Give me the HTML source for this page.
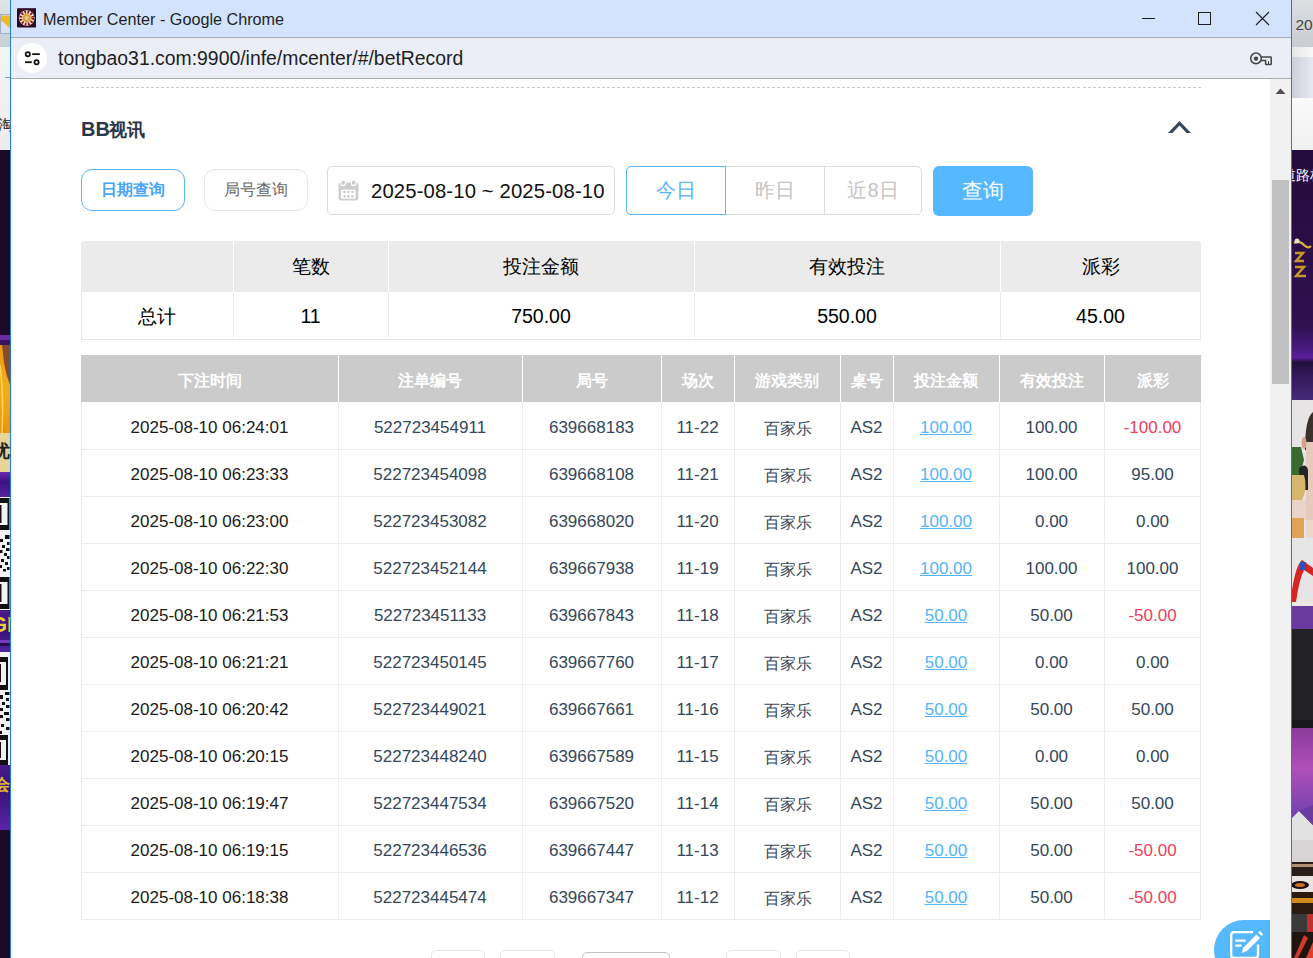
<!DOCTYPE html>
<html><head><meta charset="utf-8">
<style>
*{box-sizing:border-box;margin:0;padding:0}
html,body{width:1313px;height:958px;overflow:hidden;background:#fff;font-family:"Liberation Sans",sans-serif}
.a{position:absolute}
.c{position:absolute;text-align:center;white-space:nowrap;overflow:hidden}
.dh{color:#fff;font-size:16px;font-weight:bold;padding-top:2px}
.dd{color:#34475a;font-size:17px;padding-top:2px}
.dd.k{color:#1a1a1a}
.lnk{color:#55b4fd}
.lnk u{text-decoration:underline;text-underline-offset:1px}
.neg{color:#f0405c}
.sh{color:#000;font-size:19px;padding-top:0}
.sv{color:#000;font-size:19.5px;padding-top:1px}
#titlebar{left:11px;top:0;width:1280px;height:37px;background:#d3e3fd}
#tline{left:11px;top:37px;width:1280px;height:1px;background:#a7abb2}
#addr{left:11px;top:38px;width:1280px;height:40px;background:#ebeef6}
#aline{left:11px;top:78px;width:1280px;height:1px;background:#a9abaf}
#sb{left:1270px;top:79px;width:21px;height:879px;background:#f1f1f1}
#lborder{left:10px;top:0;width:1px;height:958px;background:#1a7fd6}
#rborder{left:1291px;top:0;width:1px;height:958px;background:#1a7fd6}
.title{left:43px;top:9.6px;font-size:16.2px;color:#1f1f1f;white-space:nowrap;line-height:18px}
.url{left:58px;top:47.3px;font-size:19.4px;color:#1f1f1f;white-space:nowrap;line-height:22px}
.btn{position:absolute;text-align:center;white-space:nowrap}
</style></head>
<body>
<!-- desktop strips -->
<div class="a" style="left:0;top:0;width:10px;height:958px;background:#1c0a28;overflow:hidden">
  <div class="a" style="left:0;top:0;width:10px;height:47px;background:linear-gradient(#e2e4e8,#c9ced6)"></div>
  <svg class="a" style="left:0;top:14px" width="10" height="20" viewBox="0 0 10 20"><rect x="0.5" y="0.5" width="11" height="19" fill="#dde2ea" stroke="#9fb0c8" stroke-width="1"/><path d="M1 1.5 H10 V14 Q7 12 5 9.5 Q3 7.5 1 7 Z" fill="#f2b820"/></svg>
  
  <div class="a" style="left:0;top:47px;width:10px;height:103px;background:linear-gradient(#f4f4f4,#ececec)"></div>
  <div class="a" style="left:5px;top:77px;width:5px;height:1px;background:#999"></div>
  <div class="a" style="left:-2px;top:115px;font-size:15px;color:#222;line-height:20px;white-space:nowrap">淘</div>
  <div class="a" style="left:0;top:335px;width:10px;height:5px;background:#6a2aa0"></div>
  <div class="a" style="left:0;top:340px;width:10px;height:5px;background:#3a1260"></div>
  
  <div class="a" style="left:0;top:433px;width:10px;height:39px;background:#e6d49a"></div>
  <div class="a" style="left:-8px;top:440px;font-size:18px;font-weight:bold;color:#222;line-height:22px">优</div>
  <div class="a" style="left:0;top:472px;width:10px;height:25px;background:linear-gradient(#6a2ab0,#3a1280 40%,#5a22a0)"></div>
  <svg class="a" style="left:0;top:345px" width="10" height="88" viewBox="0 0 10 88">
    <defs><linearGradient id="og" x1="0" y1="0" x2="0" y2="1"><stop offset="0" stop-color="#e89a18"/><stop offset="0.5" stop-color="#f4ae1a"/><stop offset="1" stop-color="#e8940e"/></linearGradient></defs>
    <rect width="10" height="88" fill="url(#og)"/>
    <path d="M2 0 H10 V40 Q6 30 4 18 Q3 8 2 0 Z" fill="#8a4a2a"/>
    <path d="M0 20 Q4 50 2 88" stroke="#ffe070" stroke-width="1.5" fill="none" opacity="0.8"/>
  </svg>
  <div class="a" style="left:0;top:497px;width:10px;height:113px;background:#f4f4f4"></div>
  <svg class="a" style="left:0;top:497px" width="10" height="113" viewBox="0 0 10 113">
    <path d="M0 1 H9.5 V33 H0 V28 H7.5 V6 H0 Z" fill="#111"/>
    <rect x="0" y="8" width="1.5" height="18" fill="#111"/>
    <g fill="#111"><rect x="5" y="38" width="4.5" height="4"/><rect x="0" y="42" width="3" height="3"/><rect x="7" y="45" width="2.5" height="3"/><rect x="2" y="48" width="3" height="3"/><rect x="6" y="51" width="3.5" height="3"/><rect x="0" y="53" width="2.5" height="3"/><rect x="4" y="56" width="3" height="3"/><rect x="7" y="59" width="2.5" height="3"/><rect x="1" y="62" width="3" height="3"/><rect x="5" y="65" width="3" height="3"/><rect x="0" y="68" width="2" height="3"/><rect x="7" y="70" width="2.5" height="3"/><rect x="3" y="72" width="3" height="2.5"/></g>
    <path d="M0 80 H9.5 V112 H0 V107 H7.5 V85 H0 Z" fill="#111"/>
    <rect x="0" y="87" width="1.5" height="18" fill="#111"/>
  </svg>
  <div class="a" style="left:0;top:610px;width:10px;height:42px;background:linear-gradient(#4a1a8a,#3a1278 50%,#5222a0)"></div>
  <div class="a" style="left:-10px;top:613px;font-size:22px;font-weight:bold;color:#f0c838;line-height:24px">GR</div><div class="a" style="left:0;top:640px;width:10px;height:3px;background:#7a3ac0"></div><div class="a" style="left:0;top:643px;width:10px;height:3px;background:#2a0a50"></div>
  <div class="a" style="left:0;top:652px;width:10px;height:113px;background:#f2f2f2"></div>
  <svg class="a" style="left:0;top:652px" width="10" height="113" viewBox="0 0 10 113">
    <path d="M0 5 H8 V38 H0 V33 H6 V10 H0 Z" fill="#111"/>
    <rect x="0" y="12" width="1" height="18" fill="#111"/>
    <g fill="#111"><rect x="5" y="40" width="4.5" height="3"/><rect x="0" y="43" width="3" height="4"/><rect x="6" y="46" width="3" height="3"/><rect x="2" y="50" width="3" height="3"/><rect x="6" y="53" width="3.5" height="3"/><rect x="0" y="56" width="3" height="3"/><rect x="4" y="60" width="5" height="3"/><rect x="0" y="63" width="3" height="3"/><rect x="6" y="66" width="3.5" height="3"/><rect x="1" y="72" width="3" height="3"/><rect x="6" y="75" width="3.5" height="3"/><rect x="0" y="79" width="2" height="3"/></g>
    <path d="M0 83 H8 V113 H0 V108 H6 V88 H0 Z" fill="#111"/>
    <rect x="0" y="90" width="1" height="16" fill="#111"/>
  </svg>
  <div class="a" style="left:0;top:765px;width:10px;height:65px;background:linear-gradient(#4a1a8a,#3a1278 40%,#5a24a8)"></div>
  <div class="a" style="left:-6px;top:775px;font-size:16px;font-weight:bold;color:#e8b830;line-height:20px">会</div>
</div>
<div class="a" style="left:1292px;top:0;width:21px;height:958px;background:#2a0f45;overflow:hidden">
  <div class="a" style="left:0;top:0;width:21px;height:47px;background:linear-gradient(#dcdee2,#c8ccd3)"></div>
  <div class="a" style="left:3.5px;top:15px;font-size:15.5px;color:#444;line-height:20px;white-space:nowrap">20</div>
  <div class="a" style="left:0;top:47px;width:21px;height:10px;background:linear-gradient(to right,#e6e6e6,#f8f8f8)"></div>
  <div class="a" style="left:0;top:57px;width:21px;height:41px;background:linear-gradient(to right,#ccd0da,#e6e9f2)"></div>
  <div class="a" style="left:0;top:98px;width:21px;height:52px;background:linear-gradient(#fafafa,#f0f0f0)"></div>
  <svg class="a" style="left:0;top:150px" width="21" height="808" viewBox="0 0 21 808">
    <defs>
      <linearGradient id="g1" x1="0" y1="0" x2="0" y2="1">
        <stop offset="0" stop-color="#240b3c"/><stop offset="0.7" stop-color="#30104f"/>
        <stop offset="0.8" stop-color="#4a1a82"/><stop offset="0.83" stop-color="#5a1e9c"/>
        <stop offset="0.85" stop-color="#22103a"/><stop offset="0.9" stop-color="#33185a"/>
        <stop offset="1" stop-color="#452a78"/>
      </linearGradient>
      <linearGradient id="g2" x1="0" y1="0" x2="0" y2="1">
        <stop offset="0" stop-color="#8a3a9a"/><stop offset="0.45" stop-color="#b050b8"/><stop offset="1" stop-color="#7040b0"/>
      </linearGradient>
    </defs>
    <rect x="0" y="0" width="21" height="250" fill="url(#g1)"/>
    <text x="-10" y="29.5" font-size="13.5" fill="#fff" font-family="Liberation Sans">道路桥</text>
    <path d="M2 93 Q8 90 12 95 Q16 99 19 96" stroke="#d8b040" stroke-width="2.2" fill="none"/>
    <circle cx="5" cy="91" r="2.5" fill="#e8e0c0"/>
    <path d="M3 103 H11 L4 111 H12 M3 117 H12 L4 126 H14" stroke="#c8982a" stroke-width="2.4" fill="none"/>
    <!-- photo 399..606 -->
    <rect x="0" y="250" width="21" height="206" fill="#e6e4e4"/>
    <path d="M13 300 Q13 268 21 262 V300 Z" fill="#3a302c"/>
    <rect x="14" y="292" width="7" height="100" fill="#e6cabc"/>
    <ellipse cx="12" cy="293" rx="2.5" ry="6" fill="#d8a090"/>
    <path d="M0 297 H9 L12 310 L8 325 H0 Z" fill="#3a6a30"/>
    <path d="M7 318 Q14 312 16 320 V340 H8 Z" fill="#242424"/>
    <path d="M0 325 H12 Q16 338 10 350 H0 Z" fill="#d6b66c"/>
    <rect x="0" y="350" width="14" height="20" fill="#e8d4c8"/>
    <rect x="0" y="368" width="12" height="20" fill="#e0a458"/><rect x="14" y="370" width="7" height="20" fill="#ecd8cc"/>
    <rect x="0" y="388" width="21" height="28" fill="#e6e6e6"/>
    <path d="M0 440 Q4 415 10 410 L21 418 V426 L12 420 Q7 430 4 452 H0 Z" fill="#d82424"/>
    <rect x="8" y="412" width="6" height="8" fill="#3050c0"/>
    <rect x="0" y="452" width="21" height="4" fill="#efe8e2"/>
    <rect x="0" y="456" width="21" height="23" fill="#6a3aa0"/>
    <rect x="0" y="479" width="21" height="91" fill="#232327"/>
    <rect x="0" y="570" width="21" height="8" fill="#18181c"/>
    <rect x="0" y="578" width="21" height="90" fill="url(#g2)"/>
    <path d="M0 668 L7 661 L21 675 V690 H0 Z" fill="#e2e2e2"/>
    <path d="M7 661 L21 655 V675 Z" fill="#6a3aa0"/>
    <rect x="0" y="690" width="21" height="22" fill="#d8d4d6"/>
    <rect x="0" y="712" width="21" height="14" fill="#2a1c18"/>
    <rect x="0" y="714" width="21" height="3" fill="#b09070"/>
    <rect x="0" y="726" width="21" height="16" fill="#e8e4e2"/>
    <ellipse cx="8" cy="735" rx="9" ry="4" fill="#1a1010"/>
    <ellipse cx="8" cy="735" rx="5" ry="2" fill="#c87020"/>
    <rect x="0" y="742" width="21" height="22" fill="#2a1a10"/>
    <rect x="0" y="748" width="21" height="5" fill="#d08a20"/>
    <rect x="0" y="764" width="21" height="18" fill="#3a3a3a"/>
    <rect x="15" y="764" width="6" height="18" fill="#c03030"/>
    <rect x="0" y="782" width="21" height="26" fill="#201410"/>
    <path d="M2 808 L12 785 L16 788 L6 808 Z" fill="#d03a2a"/>
    <path d="M14 808 L21 792 V808 Z" fill="#e04030"/>
  </svg>
</div>

<div class="a" id="titlebar"></div>
<div class="a" id="tline"></div>
<div class="a" id="addr"></div>
<div class="a" id="aline"></div>
<div class="a" id="sb"></div>
<div class="a" id="lborder"></div>
<div class="a" id="rborder"></div>

<div class="a title">Member Center - Google Chrome</div>
<div class="a url">tongbao31.com:9900/infe/mcenter/#/betRecord</div>

<!-- window controls -->
<svg class="a" style="left:1130px;top:0" width="160" height="37" viewBox="0 0 160 37">
  <rect x="12" y="18" width="13" height="1" fill="#1f1f1f"/>
  <rect x="68.5" y="12.5" width="12" height="12" fill="none" stroke="#1f1f1f" stroke-width="1"/>
  <path d="M126 12 L139 25 M139 12 L126 25" stroke="#1f1f1f" stroke-width="1.1" fill="none"/>
</svg>
<!-- favicon -->
<svg class="a" style="left:16.5px;top:8px" width="19.5" height="19.7" viewBox="0 0 20 20">
  <rect x="0" y="0" width="20" height="20" rx="1.5" fill="#2c0a24"/>
  <rect x="1" y="0" width="18" height="1" fill="#5a2a50"/>
  <circle cx="10" cy="10.2" r="8" fill="#f4ece6"/>
  <circle cx="10" cy="10.2" r="6.2" fill="none" stroke="#8e1a1a" stroke-width="3" stroke-dasharray="1.8 1.45"/>
  <circle cx="10" cy="10.2" r="4.2" fill="#d8a030"/>
  <circle cx="10" cy="10.2" r="2" fill="#d8c8a8"/>
</svg>
<!-- site info icon -->
<svg class="a" style="left:17px;top:43px" width="30" height="30" viewBox="0 0 30 30">
  <circle cx="15" cy="15" r="15" fill="#fff"/>
  <circle cx="10.8" cy="11.15" r="2.1" fill="none" stroke="#111" stroke-width="1.8"/>
  <rect x="15.2" y="10.25" width="7.6" height="1.8" fill="#111"/>
  <rect x="8" y="18.3" width="6.8" height="1.8" fill="#111"/>
  <circle cx="19.55" cy="19.2" r="2.1" fill="none" stroke="#111" stroke-width="1.8"/>
</svg>
<!-- key icon -->
<svg class="a" style="left:1240px;top:45px" width="40" height="27" viewBox="0 0 40 27">
  <circle cx="16" cy="13.4" r="5.3" fill="none" stroke="#444" stroke-width="1.5"/>
  <circle cx="16" cy="13.6" r="2.2" fill="#444"/>
  <path d="M20.8 12.1 H30.6 Q31.2 12.1 31.2 12.7 V18.9 Q31.2 19.5 30.6 19.5 H26.2 Q25.6 19.5 25.6 18.9 V15.5 H20.8" fill="none" stroke="#444" stroke-width="1.5"/>
  <path d="M28.5 16.2 V19" stroke="#444" stroke-width="1"/>
</svg>

<!-- scrollbar -->
<svg class="a" style="left:1270px;top:79px" width="21" height="20"><path d="M5.5 15 L10.5 9.5 L15.5 15 Z" fill="#505050"/></svg>
<div class="a" style="left:1272px;top:180px;width:17px;height:204px;background:#c1c1c1"></div>

<!-- dashed line -->
<div class="a" style="left:81px;top:87px;width:445px;height:1px;background-image:linear-gradient(to right,#c8c8c8 0,#c8c8c8 3px,transparent 3px);background-size:5px 1px"></div><div class="a" style="left:527px;top:87px;width:555px;height:1px;background-image:linear-gradient(to right,#c8c8c8 0,#c8c8c8 3px,transparent 3px);background-size:5px 1px"></div><div class="a" style="left:1083px;top:87px;width:118px;height:1px;background-image:linear-gradient(to right,#c8c8c8 0,#c8c8c8 3px,transparent 3px);background-size:5px 1px"></div>

<!-- heading -->
<div class="a" style="left:81px;top:116.6px;font-weight:bold;color:#2b3649;line-height:24px;white-space:nowrap"><span style="font-size:20px">BB</span><span style="font-size:18px;margin-left:-0.5px">视讯</span></div>
<svg class="a" style="left:1166px;top:119px" width="27" height="16" viewBox="0 0 27 16">
  <path d="M2 14 L13.5 2 L25 14 L20.6 14 L13.5 6.6 L6.4 14 Z" fill="#34495e"/>
</svg>

<!-- buttons -->
<div class="btn" style="left:81px;top:169px;width:104px;height:42px;border:1px solid #58b4fb;border-radius:11px;color:#47a6fb;font-size:16px;font-weight:bold;line-height:40px">日期查询</div>
<div class="btn" style="left:204px;top:169px;width:104px;height:42px;border:1px solid #e6e6e6;border-radius:11px;color:#666;font-size:16px;line-height:40px">局号查询</div>
<div class="a" style="left:327px;top:166px;width:288px;height:49px;border:1px solid #dcdcdc;border-radius:5px"></div>
<svg class="a" style="left:338px;top:180px" width="21" height="21" viewBox="0 0 21 21">
  <rect x="0.6" y="2.5" width="19.8" height="17.9" rx="2.5" fill="#cdcdcd"/>
  <rect x="2.3" y="-1" width="5.7" height="7.2" rx="2.85" fill="#fff"/>
  <rect x="12.8" y="-1" width="5.7" height="7.2" rx="2.85" fill="#fff"/>
  <rect x="3.5" y="0.5" width="3.3" height="4.3" rx="1.6" fill="#cdcdcd"/>
  <rect x="14" y="0.5" width="3.3" height="4.3" rx="1.6" fill="#cdcdcd"/>
  <rect x="3" y="9.7" width="14.5" height="9" fill="#fff"/>
  <g fill="#cdcdcd"><circle cx="6.5" cy="12" r="1.3"/><circle cx="10.4" cy="12" r="1.3"/><circle cx="14.4" cy="12" r="1.3"/><circle cx="6.5" cy="16.3" r="1.3"/><circle cx="10.4" cy="16.3" r="1.3"/><circle cx="14.4" cy="16.3" r="1.3"/></g>
</svg>
<div class="a" style="left:371px;top:179px;font-size:20.3px;color:#111;line-height:24px;white-space:nowrap;letter-spacing:0.13px">2025-08-10 ~ 2025-08-10</div>

<div class="a" style="left:626px;top:166px;width:296px;height:49px;border:1px solid #dcdcdc;border-radius:5px"></div>
<div class="a" style="left:824px;top:167px;width:1px;height:47px;background:#dcdcdc"></div>
<div class="btn" style="left:626px;top:166px;width:100px;height:49px;border:1px solid #58b4fb;border-radius:5px 0 0 5px;color:#58b4fb;font-size:20px;line-height:47px">今日</div>
<div class="btn" style="left:726px;top:166px;width:98px;height:49px;color:#c4c4c4;font-size:20px;line-height:49px">昨日</div>
<div class="btn" style="left:824px;top:166px;width:98px;height:49px;color:#c4c4c4;font-size:20px;line-height:49px">近8日</div>
<div class="btn" style="left:933px;top:166px;width:100px;height:50px;background:#56b8fe;border-radius:6px;color:#fff;font-size:21px;line-height:50px">查询</div>

<!-- summary -->
<div class="a" style="left:81px;top:241px;width:1120px;height:99px;border:1px solid #e6e6e6;border-top:0;border-radius:4px 4px 0 0"></div>
<div class="a" style="left:81px;top:241px;width:1120px;height:51px;background:#ebebeb;border-radius:4px 4px 0 0"></div>
<div class="a" style="left:233px;top:241px;width:1px;height:51px;background:#fff"></div>
<div class="a" style="left:233px;top:292px;width:1px;height:47px;background:#ececec"></div>
<div class="a" style="left:388px;top:241px;width:1px;height:51px;background:#fff"></div>
<div class="a" style="left:388px;top:292px;width:1px;height:47px;background:#ececec"></div>
<div class="a" style="left:694px;top:241px;width:1px;height:51px;background:#fff"></div>
<div class="a" style="left:694px;top:292px;width:1px;height:47px;background:#ececec"></div>
<div class="a" style="left:1000px;top:241px;width:1px;height:51px;background:#fff"></div>
<div class="a" style="left:1000px;top:292px;width:1px;height:47px;background:#ececec"></div>
<div class="c sh" style="left:81px;top:241px;width:152px;height:51px;line-height:51px"></div>
<div class="c sv" style="left:81px;top:292px;width:152px;height:47px;line-height:47px"><span style="font-size:19px">总计</span></div>
<div class="c sh" style="left:233px;top:241px;width:155px;height:51px;line-height:51px">笔数</div>
<div class="c sv" style="left:233px;top:292px;width:155px;height:47px;line-height:47px">11</div>
<div class="c sh" style="left:388px;top:241px;width:306px;height:51px;line-height:51px">投注金额</div>
<div class="c sv" style="left:388px;top:292px;width:306px;height:47px;line-height:47px">750.00</div>
<div class="c sh" style="left:694px;top:241px;width:306px;height:51px;line-height:51px">有效投注</div>
<div class="c sv" style="left:694px;top:292px;width:306px;height:47px;line-height:47px">550.00</div>
<div class="c sh" style="left:1000px;top:241px;width:201px;height:51px;line-height:51px">派彩</div>
<div class="c sv" style="left:1000px;top:292px;width:201px;height:47px;line-height:47px">45.00</div>

<!-- detail -->
<div class="a" style="left:81px;top:355px;width:1120px;height:47px;background:#cbcbcb"></div>
<div class="a" style="left:338px;top:355px;width:1px;height:47px;background:#fff"></div>
<div class="a" style="left:522px;top:355px;width:1px;height:47px;background:#fff"></div>
<div class="a" style="left:661px;top:355px;width:1px;height:47px;background:#fff"></div>
<div class="a" style="left:734px;top:355px;width:1px;height:47px;background:#fff"></div>
<div class="a" style="left:840px;top:355px;width:1px;height:47px;background:#fff"></div>
<div class="a" style="left:893px;top:355px;width:1px;height:47px;background:#fff"></div>
<div class="a" style="left:999px;top:355px;width:1px;height:47px;background:#fff"></div>
<div class="a" style="left:1104px;top:355px;width:1px;height:47px;background:#fff"></div>
<div class="c dh" style="left:81px;top:355px;width:257px;height:47px;line-height:47px">下注时间</div>
<div class="c dh" style="left:338px;top:355px;width:184px;height:47px;line-height:47px">注单编号</div>
<div class="c dh" style="left:522px;top:355px;width:139px;height:47px;line-height:47px">局号</div>
<div class="c dh" style="left:661px;top:355px;width:73px;height:47px;line-height:47px">场次</div>
<div class="c dh" style="left:734px;top:355px;width:106px;height:47px;line-height:47px">游戏类别</div>
<div class="c dh" style="left:840px;top:355px;width:53px;height:47px;line-height:47px">桌号</div>
<div class="c dh" style="left:893px;top:355px;width:106px;height:47px;line-height:47px">投注金额</div>
<div class="c dh" style="left:999px;top:355px;width:105px;height:47px;line-height:47px">有效投注</div>
<div class="c dh" style="left:1104px;top:355px;width:97px;height:47px;line-height:47px">派彩</div>
<div class="a" style="left:81px;top:402px;width:1px;height:518px;background:#ececec"></div>
<div class="a" style="left:1200px;top:402px;width:1px;height:518px;background:#ececec"></div>
<div class="a" style="left:338px;top:402px;width:1px;height:517px;background:#ececec"></div>
<div class="a" style="left:522px;top:402px;width:1px;height:517px;background:#ececec"></div>
<div class="a" style="left:661px;top:402px;width:1px;height:517px;background:#ececec"></div>
<div class="a" style="left:734px;top:402px;width:1px;height:517px;background:#ececec"></div>
<div class="a" style="left:840px;top:402px;width:1px;height:517px;background:#ececec"></div>
<div class="a" style="left:893px;top:402px;width:1px;height:517px;background:#ececec"></div>
<div class="a" style="left:999px;top:402px;width:1px;height:517px;background:#ececec"></div>
<div class="a" style="left:1104px;top:402px;width:1px;height:517px;background:#ececec"></div>
<div class="a" style="left:81px;top:449px;width:1120px;height:1px;background:#ececec"></div>
<div class="c dd k" style="left:81px;top:402px;width:257px;height:47px;line-height:47px">2025-08-10 06:24:01</div>
<div class="c dd" style="left:338px;top:402px;width:184px;height:47px;line-height:47px">522723454911</div>
<div class="c dd" style="left:522px;top:402px;width:139px;height:47px;line-height:47px">639668183</div>
<div class="c dd" style="left:661px;top:402px;width:73px;height:47px;line-height:47px">11-22</div>
<div class="c dd" style="left:734px;top:402px;width:106px;height:47px;line-height:47px"><span style="font-size:16px;position:relative;left:1px;top:1px">百家乐</span></div>
<div class="c dd" style="left:840px;top:402px;width:53px;height:47px;line-height:47px">AS2</div>
<div class="c dd lnk" style="left:893px;top:402px;width:106px;height:47px;line-height:47px"><u>100.00</u></div>
<div class="c dd" style="left:999px;top:402px;width:105px;height:47px;line-height:47px">100.00</div>
<div class="c dd neg" style="left:1104px;top:402px;width:97px;height:47px;line-height:47px">-100.00</div>
<div class="a" style="left:81px;top:496px;width:1120px;height:1px;background:#ececec"></div>
<div class="c dd k" style="left:81px;top:449px;width:257px;height:47px;line-height:47px">2025-08-10 06:23:33</div>
<div class="c dd" style="left:338px;top:449px;width:184px;height:47px;line-height:47px">522723454098</div>
<div class="c dd" style="left:522px;top:449px;width:139px;height:47px;line-height:47px">639668108</div>
<div class="c dd" style="left:661px;top:449px;width:73px;height:47px;line-height:47px">11-21</div>
<div class="c dd" style="left:734px;top:449px;width:106px;height:47px;line-height:47px"><span style="font-size:16px;position:relative;left:1px;top:1px">百家乐</span></div>
<div class="c dd" style="left:840px;top:449px;width:53px;height:47px;line-height:47px">AS2</div>
<div class="c dd lnk" style="left:893px;top:449px;width:106px;height:47px;line-height:47px"><u>100.00</u></div>
<div class="c dd" style="left:999px;top:449px;width:105px;height:47px;line-height:47px">100.00</div>
<div class="c dd" style="left:1104px;top:449px;width:97px;height:47px;line-height:47px">95.00</div>
<div class="a" style="left:81px;top:543px;width:1120px;height:1px;background:#ececec"></div>
<div class="c dd k" style="left:81px;top:496px;width:257px;height:47px;line-height:47px">2025-08-10 06:23:00</div>
<div class="c dd" style="left:338px;top:496px;width:184px;height:47px;line-height:47px">522723453082</div>
<div class="c dd" style="left:522px;top:496px;width:139px;height:47px;line-height:47px">639668020</div>
<div class="c dd" style="left:661px;top:496px;width:73px;height:47px;line-height:47px">11-20</div>
<div class="c dd" style="left:734px;top:496px;width:106px;height:47px;line-height:47px"><span style="font-size:16px;position:relative;left:1px;top:1px">百家乐</span></div>
<div class="c dd" style="left:840px;top:496px;width:53px;height:47px;line-height:47px">AS2</div>
<div class="c dd lnk" style="left:893px;top:496px;width:106px;height:47px;line-height:47px"><u>100.00</u></div>
<div class="c dd" style="left:999px;top:496px;width:105px;height:47px;line-height:47px">0.00</div>
<div class="c dd" style="left:1104px;top:496px;width:97px;height:47px;line-height:47px">0.00</div>
<div class="a" style="left:81px;top:590px;width:1120px;height:1px;background:#ececec"></div>
<div class="c dd k" style="left:81px;top:543px;width:257px;height:47px;line-height:47px">2025-08-10 06:22:30</div>
<div class="c dd" style="left:338px;top:543px;width:184px;height:47px;line-height:47px">522723452144</div>
<div class="c dd" style="left:522px;top:543px;width:139px;height:47px;line-height:47px">639667938</div>
<div class="c dd" style="left:661px;top:543px;width:73px;height:47px;line-height:47px">11-19</div>
<div class="c dd" style="left:734px;top:543px;width:106px;height:47px;line-height:47px"><span style="font-size:16px;position:relative;left:1px;top:1px">百家乐</span></div>
<div class="c dd" style="left:840px;top:543px;width:53px;height:47px;line-height:47px">AS2</div>
<div class="c dd lnk" style="left:893px;top:543px;width:106px;height:47px;line-height:47px"><u>100.00</u></div>
<div class="c dd" style="left:999px;top:543px;width:105px;height:47px;line-height:47px">100.00</div>
<div class="c dd" style="left:1104px;top:543px;width:97px;height:47px;line-height:47px">100.00</div>
<div class="a" style="left:81px;top:637px;width:1120px;height:1px;background:#ececec"></div>
<div class="c dd k" style="left:81px;top:590px;width:257px;height:47px;line-height:47px">2025-08-10 06:21:53</div>
<div class="c dd" style="left:338px;top:590px;width:184px;height:47px;line-height:47px">522723451133</div>
<div class="c dd" style="left:522px;top:590px;width:139px;height:47px;line-height:47px">639667843</div>
<div class="c dd" style="left:661px;top:590px;width:73px;height:47px;line-height:47px">11-18</div>
<div class="c dd" style="left:734px;top:590px;width:106px;height:47px;line-height:47px"><span style="font-size:16px;position:relative;left:1px;top:1px">百家乐</span></div>
<div class="c dd" style="left:840px;top:590px;width:53px;height:47px;line-height:47px">AS2</div>
<div class="c dd lnk" style="left:893px;top:590px;width:106px;height:47px;line-height:47px"><u>50.00</u></div>
<div class="c dd" style="left:999px;top:590px;width:105px;height:47px;line-height:47px">50.00</div>
<div class="c dd neg" style="left:1104px;top:590px;width:97px;height:47px;line-height:47px">-50.00</div>
<div class="a" style="left:81px;top:684px;width:1120px;height:1px;background:#ececec"></div>
<div class="c dd k" style="left:81px;top:637px;width:257px;height:47px;line-height:47px">2025-08-10 06:21:21</div>
<div class="c dd" style="left:338px;top:637px;width:184px;height:47px;line-height:47px">522723450145</div>
<div class="c dd" style="left:522px;top:637px;width:139px;height:47px;line-height:47px">639667760</div>
<div class="c dd" style="left:661px;top:637px;width:73px;height:47px;line-height:47px">11-17</div>
<div class="c dd" style="left:734px;top:637px;width:106px;height:47px;line-height:47px"><span style="font-size:16px;position:relative;left:1px;top:1px">百家乐</span></div>
<div class="c dd" style="left:840px;top:637px;width:53px;height:47px;line-height:47px">AS2</div>
<div class="c dd lnk" style="left:893px;top:637px;width:106px;height:47px;line-height:47px"><u>50.00</u></div>
<div class="c dd" style="left:999px;top:637px;width:105px;height:47px;line-height:47px">0.00</div>
<div class="c dd" style="left:1104px;top:637px;width:97px;height:47px;line-height:47px">0.00</div>
<div class="a" style="left:81px;top:731px;width:1120px;height:1px;background:#ececec"></div>
<div class="c dd k" style="left:81px;top:684px;width:257px;height:47px;line-height:47px">2025-08-10 06:20:42</div>
<div class="c dd" style="left:338px;top:684px;width:184px;height:47px;line-height:47px">522723449021</div>
<div class="c dd" style="left:522px;top:684px;width:139px;height:47px;line-height:47px">639667661</div>
<div class="c dd" style="left:661px;top:684px;width:73px;height:47px;line-height:47px">11-16</div>
<div class="c dd" style="left:734px;top:684px;width:106px;height:47px;line-height:47px"><span style="font-size:16px;position:relative;left:1px;top:1px">百家乐</span></div>
<div class="c dd" style="left:840px;top:684px;width:53px;height:47px;line-height:47px">AS2</div>
<div class="c dd lnk" style="left:893px;top:684px;width:106px;height:47px;line-height:47px"><u>50.00</u></div>
<div class="c dd" style="left:999px;top:684px;width:105px;height:47px;line-height:47px">50.00</div>
<div class="c dd" style="left:1104px;top:684px;width:97px;height:47px;line-height:47px">50.00</div>
<div class="a" style="left:81px;top:778px;width:1120px;height:1px;background:#ececec"></div>
<div class="c dd k" style="left:81px;top:731px;width:257px;height:47px;line-height:47px">2025-08-10 06:20:15</div>
<div class="c dd" style="left:338px;top:731px;width:184px;height:47px;line-height:47px">522723448240</div>
<div class="c dd" style="left:522px;top:731px;width:139px;height:47px;line-height:47px">639667589</div>
<div class="c dd" style="left:661px;top:731px;width:73px;height:47px;line-height:47px">11-15</div>
<div class="c dd" style="left:734px;top:731px;width:106px;height:47px;line-height:47px"><span style="font-size:16px;position:relative;left:1px;top:1px">百家乐</span></div>
<div class="c dd" style="left:840px;top:731px;width:53px;height:47px;line-height:47px">AS2</div>
<div class="c dd lnk" style="left:893px;top:731px;width:106px;height:47px;line-height:47px"><u>50.00</u></div>
<div class="c dd" style="left:999px;top:731px;width:105px;height:47px;line-height:47px">0.00</div>
<div class="c dd" style="left:1104px;top:731px;width:97px;height:47px;line-height:47px">0.00</div>
<div class="a" style="left:81px;top:825px;width:1120px;height:1px;background:#ececec"></div>
<div class="c dd k" style="left:81px;top:778px;width:257px;height:47px;line-height:47px">2025-08-10 06:19:47</div>
<div class="c dd" style="left:338px;top:778px;width:184px;height:47px;line-height:47px">522723447534</div>
<div class="c dd" style="left:522px;top:778px;width:139px;height:47px;line-height:47px">639667520</div>
<div class="c dd" style="left:661px;top:778px;width:73px;height:47px;line-height:47px">11-14</div>
<div class="c dd" style="left:734px;top:778px;width:106px;height:47px;line-height:47px"><span style="font-size:16px;position:relative;left:1px;top:1px">百家乐</span></div>
<div class="c dd" style="left:840px;top:778px;width:53px;height:47px;line-height:47px">AS2</div>
<div class="c dd lnk" style="left:893px;top:778px;width:106px;height:47px;line-height:47px"><u>50.00</u></div>
<div class="c dd" style="left:999px;top:778px;width:105px;height:47px;line-height:47px">50.00</div>
<div class="c dd" style="left:1104px;top:778px;width:97px;height:47px;line-height:47px">50.00</div>
<div class="a" style="left:81px;top:872px;width:1120px;height:1px;background:#ececec"></div>
<div class="c dd k" style="left:81px;top:825px;width:257px;height:47px;line-height:47px">2025-08-10 06:19:15</div>
<div class="c dd" style="left:338px;top:825px;width:184px;height:47px;line-height:47px">522723446536</div>
<div class="c dd" style="left:522px;top:825px;width:139px;height:47px;line-height:47px">639667447</div>
<div class="c dd" style="left:661px;top:825px;width:73px;height:47px;line-height:47px">11-13</div>
<div class="c dd" style="left:734px;top:825px;width:106px;height:47px;line-height:47px"><span style="font-size:16px;position:relative;left:1px;top:1px">百家乐</span></div>
<div class="c dd" style="left:840px;top:825px;width:53px;height:47px;line-height:47px">AS2</div>
<div class="c dd lnk" style="left:893px;top:825px;width:106px;height:47px;line-height:47px"><u>50.00</u></div>
<div class="c dd" style="left:999px;top:825px;width:105px;height:47px;line-height:47px">50.00</div>
<div class="c dd neg" style="left:1104px;top:825px;width:97px;height:47px;line-height:47px">-50.00</div>
<div class="a" style="left:81px;top:919px;width:1120px;height:1px;background:#ececec"></div>
<div class="c dd k" style="left:81px;top:872px;width:257px;height:47px;line-height:47px">2025-08-10 06:18:38</div>
<div class="c dd" style="left:338px;top:872px;width:184px;height:47px;line-height:47px">522723445474</div>
<div class="c dd" style="left:522px;top:872px;width:139px;height:47px;line-height:47px">639667347</div>
<div class="c dd" style="left:661px;top:872px;width:73px;height:47px;line-height:47px">11-12</div>
<div class="c dd" style="left:734px;top:872px;width:106px;height:47px;line-height:47px"><span style="font-size:16px;position:relative;left:1px;top:1px">百家乐</span></div>
<div class="c dd" style="left:840px;top:872px;width:53px;height:47px;line-height:47px">AS2</div>
<div class="c dd lnk" style="left:893px;top:872px;width:106px;height:47px;line-height:47px"><u>50.00</u></div>
<div class="c dd" style="left:999px;top:872px;width:105px;height:47px;line-height:47px">50.00</div>
<div class="c dd neg" style="left:1104px;top:872px;width:97px;height:47px;line-height:47px">-50.00</div>

<!-- pagination -->
<div class="a" style="left:431px;top:950px;width:54px;height:40px;border:1px solid #e6e6e6;border-radius:5px"></div>
<div class="a" style="left:500px;top:950px;width:55px;height:40px;border:1px solid #e6e6e6;border-radius:5px"></div>
<div class="a" style="left:582px;top:952px;width:88px;height:40px;border:1px solid #c4c4c4;border-radius:5px"></div>
<div class="a" style="left:726px;top:950px;width:55px;height:40px;border:1px solid #e6e6e6;border-radius:5px"></div>
<div class="a" style="left:796px;top:950px;width:54px;height:40px;border:1px solid #e6e6e6;border-radius:5px"></div>

<!-- floating button -->
<div class="a" style="left:1214px;top:920px;width:56px;height:60px;background:#56b8fe;border-radius:31px 0 0 31px"></div>
<svg class="a" style="left:1228px;top:929px" width="40" height="29" viewBox="0 0 40 29">
  <path d="M25 3.2 H6 Q3.2 3.2 3.2 6 V26 Q3.2 29 6 29 H27 Q30 29 30 26 V15.5" fill="none" stroke="#fff" stroke-width="2.3"/>
  <rect x="7" y="10.5" width="11" height="2.2" rx="1.1" fill="#fff"/>
  <rect x="7" y="15.5" width="7" height="2.2" rx="1.1" fill="#fff"/>
  <path d="M13.5 24 L15.5 18.5 L28.5 5.5 L32 9 L19 22 Z" fill="#fff"/>
  <path d="M30 3.5 L31.7 1.8 L35.2 5.3 L33.5 7 Z" fill="#fff"/>
</svg>
</body></html>
